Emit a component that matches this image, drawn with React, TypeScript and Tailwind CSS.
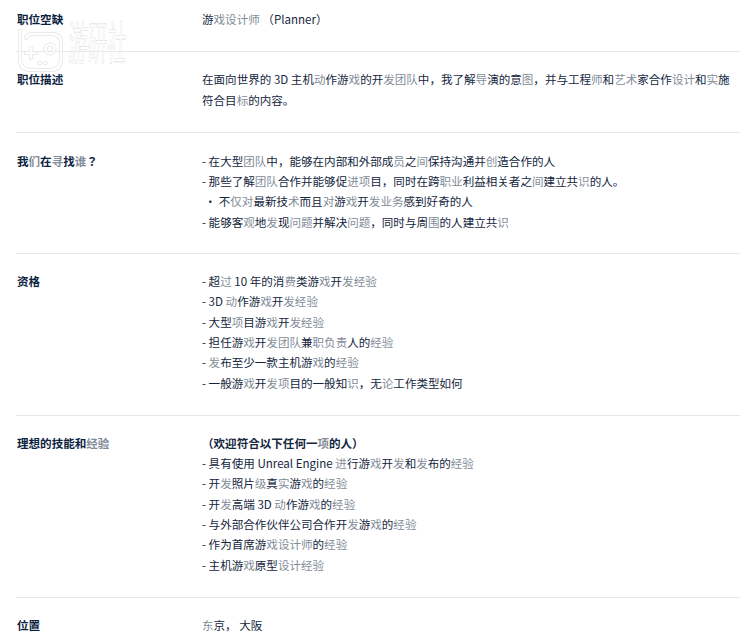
const LIGHT = '戏发动设计师团队导图艺术实标员间创进项职业识仅对务观问题围费过经验负责论级东';
const HEAD_LIGHT = '经验寻们谁';

function Rich({ text, light = LIGHT }: { text: string; light?: string }) {
  return (
    <>
      {Array.from(text).map((ch, i) =>
        light.includes(ch) ? (
          <span key={i} className="text-[#828c97] leading-none font-['Noto_Sans_CJK_SC',sans-serif]">
            {ch}
          </span>
        ) : (
          ch
        ),
      )}
    </>
  );
}

interface RowTypes {
  label: string;
  lines: string[];
  pad: string;
}

const rows: RowTypes[] = [
  {
    label: '职位描述',
    pad: 'pt-[17px] pb-[22px]',
    lines: [
      '在面向世界的 3D 主机动作游戏的开发团队中，我了解导演的意图，并与工程师和艺术家合作设计和实施',
      '符合目标的内容。',
    ],
  },
  {
    label: '我们在寻找谁？',
    pad: 'pt-[18px] pb-[21px]',
    lines: [
      '- 在大型团队中，能够在内部和外部成员之间保持沟通并创造合作的人',
      '- 那些了解团队合作并能够促进项目，同时在跨职业利益相关者之间建立共识的人。',
      ' ・ 不仅对最新技术而且对游戏开发业务感到好奇的人',
      '- 能够客观地发现问题并解决问题，同时与周围的人建立共识',
    ],
  },
  {
    label: '资格',
    pad: 'pt-[17px] pb-[22px]',
    lines: [
      '- 超过 10 年的消费类游戏开发经验',
      '- 3D 动作游戏开发经验',
      '- 大型项目游戏开发经验',
      '- 担任游戏开发团队兼职负责人的经验',
      '- 发布至少一款主机游戏的经验',
      '- 一般游戏开发项目的一般知识，无论工作类型如何',
    ],
  },
  {
    label: '理想的技能和经验',
    pad: 'pt-[17px] pb-[22px]',
    lines: [
      '（欢迎符合以下任何一项的人）',
      '- 具有使用 Unreal Engine 进行游戏开发和发布的经验',
      '- 开发照片级真实游戏的经验',
      '- 开发高端 3D 动作游戏的经验',
      '- 与外部合作伙伴公司合作开发游戏的经验',
      '- 作为首席游戏设计师的经验',
      '- 主机游戏原型设计经验',
    ],
  },
];

function Row({ label, lines, pad, border = true }: RowTypes & { border?: boolean }) {
  return (
    <div className={`flex ${pad} ${border ? 'border-b border-[#e6e8ea]' : ''}`}>
      <div className="w-[186px] shrink-0 pl-px font-bold text-[#0c2340]">
        <Rich text={label} light={HEAD_LIGHT} />
      </div>
      <div className="flex-1 text-[#14263e]">
        {lines.map((line, i) => (
          <p key={i} className={line.startsWith('（') ? 'font-bold whitespace-pre' : 'whitespace-pre'}>
            <Rich text={line} />
          </p>
        ))}
      </div>
    </div>
  );
}

function LogoStrokes({ stroke, width }: { stroke: string; width: number }) {
  return (
    <g fill="none" stroke={stroke} strokeWidth={width} strokeLinecap="round">
      <path d="M3 6 V34 Q3 45 14 45 H33 Q44 45 44 34 V18 Q44 9 35 9 H16 Q10 9 9 13" />
      <path d="M9 28 h10 M14 23 v10" />
      <circle cx="33" cy="24" r="4.5" />
      <path d="M22 38 h1 M28 38 h1" />
    </g>
  );
}

function Watermark() {
  return (
    <>
      <svg className="absolute left-[17px] top-[25px] opacity-80" width="47" height="48" viewBox="0 0 47 48">
        <LogoStrokes stroke="#dedede" width={4} />
        <LogoStrokes stroke="#ffffff" width={2.6} />
      </svg>
      <span className="absolute left-[70px] top-[10px] origin-top-left scale-x-[0.42] -skew-x-6 text-[46px] leading-[60px] font-normal whitespace-nowrap text-white/40 font-['Noto_Sans_CJK_SC',sans-serif] [-webkit-text-stroke:0.6px_#dcdcdc]">
        游研社
      </span>
    </>
  );
}

export default function App() {
  return (
    <div className="relative h-[635px] w-[750px] overflow-hidden bg-white pl-4 pr-[10px] text-[11.55px] leading-[20.3px] font-['Noto_Sans_CJK_JP','Noto_Sans',sans-serif]">
      <Row label="职位空缺" pad="pt-[9px] pb-[22px]" lines={['游戏设计师 （Planner）']} />
      {rows.map((row) => (
        <Row key={row.label} {...row} />
      ))}
      <Row label="位置" pad="pt-[17px]" lines={['东京， 大阪']} border={false} />
      <Watermark />
    </div>
  );
}
